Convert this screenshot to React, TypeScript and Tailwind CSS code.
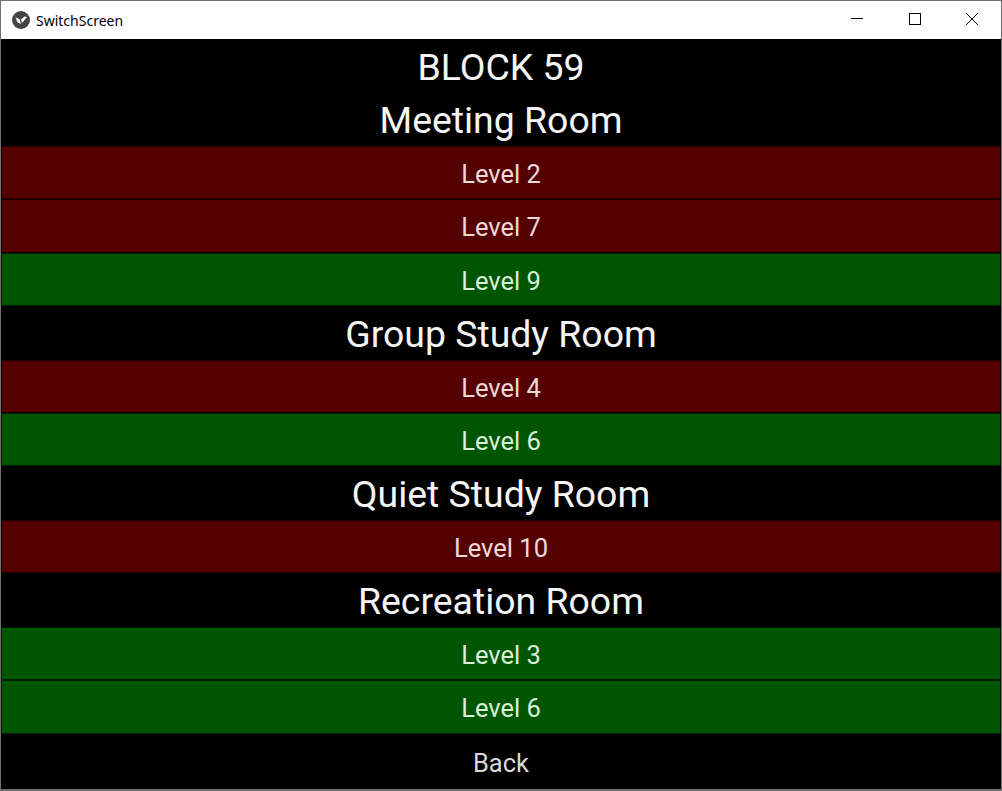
type Row =
  | { kind: "title"; text: string }
  | { kind: "red" | "green" | "back"; text: string };

const rows: Row[] = [
  { kind: "title", text: "BLOCK 59" },
  { kind: "title", text: "Meeting Room" },
  { kind: "red", text: "Level 2" },
  { kind: "red", text: "Level 7" },
  { kind: "green", text: "Level 9" },
  { kind: "title", text: "Group Study Room" },
  { kind: "red", text: "Level 4" },
  { kind: "green", text: "Level 6" },
  { kind: "title", text: "Quiet Study Room" },
  { kind: "red", text: "Level 10" },
  { kind: "title", text: "Recreation Room" },
  { kind: "green", text: "Level 3" },
  { kind: "green", text: "Level 6" },
  { kind: "back", text: "Back" },
];

function KivyLogo() {
  return (
    <svg width="18" height="18" viewBox="0 0 18 18">
      <circle cx="9" cy="9" r="9" fill="#444444" />
      <path d="M3.5 6.5 L7.5 8 L9 13 L5.5 11.5 Z M9 8.5 L12.5 5.5 L15 6 L12.5 9 L10 12 Z" fill="#ffffff" />
    </svg>
  );
}

function RowItem({ row }: { row: Row }) {
  if (row.kind === "title") {
    return <div className="flex items-center justify-center pt-0.5 text-[37.4px] text-[#f5f5f5]">{row.text}</div>;
  }
  if (row.kind === "back") {
    return <button className="flex items-center justify-center pt-[5px] text-[25.5px] text-[#d9d9d9]">{row.text}</button>;
  }
  const color =
    row.kind === "red"
      ? "bg-[#550000] border-[#1c0000] text-[#f0d8d8]"
      : "bg-[#005500] border-[#001c00] text-[#d8f0d8]";
  return (
    <button className={"flex items-center justify-center border pt-[3px] text-[25.5px] " + color}>
      {row.text}
    </button>
  );
}

export default function App() {
  return (
    <div className="flex h-[791px] w-[1002px] flex-col overflow-hidden border border-b-2 border-[#707070] bg-black font-['Roboto',sans-serif]">
      <div className="flex h-[38px] shrink-0 items-center bg-white pl-[11px] text-[14px] text-black">
        <KivyLogo />
        <span className="ml-[6px] font-['Noto_Sans',sans-serif]">SwitchScreen</span>
        <div className="ml-auto flex h-full pr-px pb-[2px]">
          <div className="flex w-[59px] items-center justify-center">
            <svg width="14" height="14" viewBox="0 0 14 14" fill="none" stroke="#000000" strokeWidth="1">
              <path d="M1 6.5 H13" />
            </svg>
          </div>
          <div className="flex w-[57px] items-center justify-center">
            <svg width="14" height="14" viewBox="0 0 14 14" fill="none" stroke="#000000" strokeWidth="1">
              <rect x="1.5" y="1.5" width="11" height="11" />
            </svg>
          </div>
          <div className="flex w-[57px] items-center justify-center">
            <svg width="14" height="14" viewBox="0 0 14 14" fill="none" stroke="#000000" strokeWidth="1">
              <path d="M1 1 L13 13 M13 1 L1 13" />
            </svg>
          </div>
        </div>
      </div>
      <div className="grid h-[748px] shrink-0 grid-rows-[repeat(14,minmax(0,1fr))]">
        {rows.map((r, i) => (
          <RowItem key={i} row={r} />
        ))}
      </div>
    </div>
  );
}
